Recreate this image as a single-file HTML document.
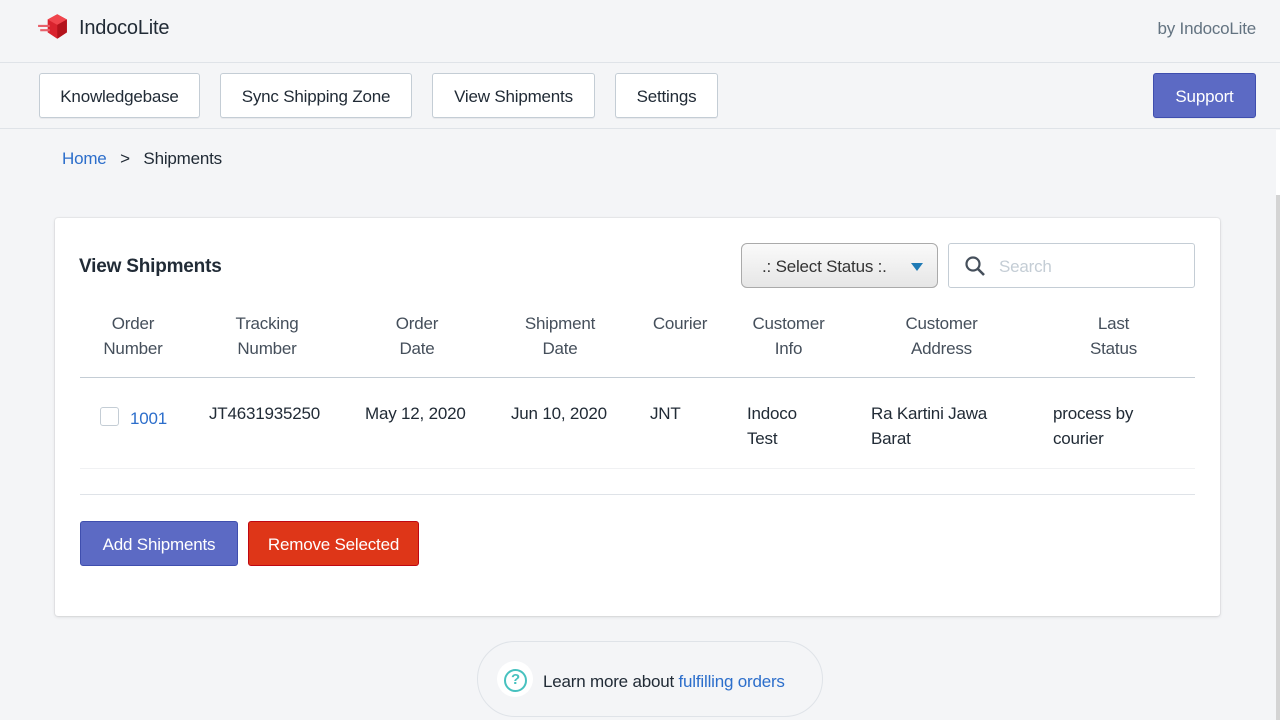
<!DOCTYPE html>
<html><head><meta charset="utf-8"><style>
*{box-sizing:border-box;margin:0;padding:0}
body{width:1280px;height:720px;overflow:hidden;background:#f4f5f7;font-family:"Segoe UI","Liberation Sans",sans-serif;color:#212b36;position:relative;font-size:16px;letter-spacing:-0.2px}
.hdr{position:absolute;left:0;top:0;width:1280px;height:63px;border-bottom:1px solid #dfe3e8;background:#f4f5f7}
.logo{position:absolute;left:37px;top:12px}
.brand{position:absolute;left:79px;top:17px;font-size:20px;color:#212b36}
.by{position:absolute;right:24px;top:19px;font-size:17px;color:#637381}
.nav{position:absolute;left:0;top:63px;width:1280px;height:66px;border-bottom:1px solid #dfe3e8;background:#f4f5f7}
.btn{position:absolute;top:10px;height:45px;border:1px solid #c4cdd5;border-radius:3px;background:#fff;font-size:17px;color:#212b36;display:flex;align-items:center;justify-content:center;padding-top:3px;box-shadow:0 1px 0 rgba(22,29,37,.05)}
.sup{background:#5c6ac4;color:#fff;border-color:#3f4eae}
.crumb{position:absolute;left:62px;top:149px;font-size:17px}
.crumb a{color:#2c6ecb}
.card{position:absolute;left:55px;top:218px;width:1165px;height:398px;background:#fff;border-radius:3px;box-shadow:0 0 0 1px rgba(63,63,68,.05),0 1px 3px rgba(63,63,68,.15)}
.ttl{position:absolute;left:24px;top:38px;font-size:19px;font-weight:bold}
.sel{position:absolute;left:686px;top:25px;width:197px;height:45px;border:1px solid #aaa;border-radius:6px;background:linear-gradient(#fafafa,#e6e6e6);font-family:"Liberation Sans",sans-serif;font-size:17px;color:#333;padding:13px 0 0 20px}
.sel:after{content:"";position:absolute;right:14px;top:19px;border-left:6px solid transparent;border-right:6px solid transparent;border-top:8px solid #1f7ab5}
.srch{position:absolute;left:893px;top:25px;width:247px;height:45px;border:1px solid #c4cdd5;border-radius:3px;font-family:"Liberation Sans",sans-serif;font-size:17px;color:#c4cdd5;padding:13px 0 0 50px}
.th{position:absolute;top:93px;font-size:17px;color:#454f5b;text-align:center;line-height:25px;white-space:nowrap}
.td{position:absolute;font-size:17px;color:#212b36;line-height:25px;white-space:nowrap}
.hl{position:absolute;left:25px;width:1115px;height:1px;background:#dfe3e8}
.b2{position:absolute;top:303px;height:45px;border-radius:3px;color:#fff;font-size:17px;display:flex;align-items:center;justify-content:center;padding-top:3px}
.help{position:absolute;left:477px;top:641px;width:346px;height:76px;border:1px solid #dfe3e8;border-radius:38px;font-size:17px}
</style></head><body>
<div class="hdr">
<svg class="logo" width="32" height="30" viewBox="0 0 30 28"><path d="M10 7 L19 2 L28 7 L28 19 L19 25 L10 19Z" fill="#d9232e"/><path d="M10 7 L19 12 L28 7 L19 2Z" fill="#f0454d"/><path d="M19 12 L19 25 L28 19 L28 7Z" fill="#b3131c"/><rect x="1" y="12" width="11" height="2" fill="#e8606a"/><rect x="3" y="16" width="9" height="2" fill="#e8606a"/></svg>
<div class="brand">IndocoLite</div>
<div class="by">by IndocoLite</div>
</div>
<div class="nav">
<div class="btn" style="left:39px;width:161px">Knowledgebase</div>
<div class="btn" style="left:220px;width:192px">Sync Shipping Zone</div>
<div class="btn" style="left:432px;width:163px">View Shipments</div>
<div class="btn" style="left:615px;width:103px">Settings</div>
<div class="btn sup" style="left:1153px;width:103px">Support</div>
</div>
<div class="crumb"><a>Home</a>&nbsp;&nbsp;&nbsp;&gt;&nbsp;&nbsp;&nbsp;Shipments</div>
<div class="card">
<div class="ttl">View Shipments</div>
<div class="sel">.: Select Status :.</div>
<div class="srch"><svg style="position:absolute;left:15px;top:11px" width="22" height="22" viewBox="0 0 22 22"><circle cx="9" cy="9" r="6.5" fill="none" stroke="#454f5b" stroke-width="2.2"/><path d="M14 14 L20 20" stroke="#454f5b" stroke-width="2.6"/></svg>Search</div>
<div class="th" style="left:48px;width:60px">Order<br>Number</div>
<div class="th" style="left:170px;width:84px">Tracking<br>Number</div>
<div class="th" style="left:330px;width:64px">Order<br>Date</div>
<div class="th" style="left:460px;width:90px">Shipment<br>Date</div>
<div class="th" style="left:594px;width:62px">Courier<br>&nbsp;</div>
<div class="th" style="left:690px;width:87px">Customer<br>Info</div>
<div class="th" style="left:843px;width:87px">Customer<br>Address</div>
<div class="th" style="left:1030px;width:57px">Last<br>Status</div>
<div class="hl" style="top:159px;background:#c4cdd5"></div>
<div style="position:absolute;left:45px;top:189px;width:19px;height:19px;border:1px solid #c4cdd5;border-radius:3px"></div>
<div class="td" style="left:75px;top:188px;color:#2c6ecb">1001</div>
<div class="td" style="left:154px;top:183px">JT4631935250</div>
<div class="td" style="left:310px;top:183px">May 12, 2020</div>
<div class="td" style="left:456px;top:183px">Jun 10, 2020</div>
<div class="td" style="left:595px;top:183px">JNT</div>
<div class="td" style="left:692px;top:183px">Indoco<br>Test</div>
<div class="td" style="left:816px;top:183px">Ra Kartini Jawa<br>Barat</div>
<div class="td" style="left:998px;top:183px">process by<br>courier</div>
<div class="hl" style="top:250px;background:#f0f1f3"></div>
<div class="hl" style="top:276px"></div>
<div class="b2" style="left:25px;width:158px;background:#5c6ac4;border:1px solid #3f4eae">Add Shipments</div>
<div class="b2" style="left:193px;width:171px;background:#de3618;border:1px solid #bf0711">Remove Selected</div>
</div>
<div class="help">
<div style="position:absolute;left:19px;top:19px;width:36px;height:36px;border-radius:50%;background:#fff"></div>
<div style="position:absolute;left:26px;top:27px;width:23px;height:23px;border-radius:50%;border:2.5px solid #47c1bf;color:#47c1bf;font-size:15px;font-weight:bold;text-align:center;line-height:18px;font-family:'Liberation Sans',sans-serif">?</div>
<div style="position:absolute;left:65px;top:30px">Learn more about <span style="color:#2c6ecb">fulfilling orders</span></div>
</div>
<div style="position:absolute;left:1276px;top:130px;width:4px;height:590px;background:#fff"></div>
<div style="position:absolute;left:1276px;top:195px;width:4px;height:525px;background:#d4d4d4"></div>
</body></html>
